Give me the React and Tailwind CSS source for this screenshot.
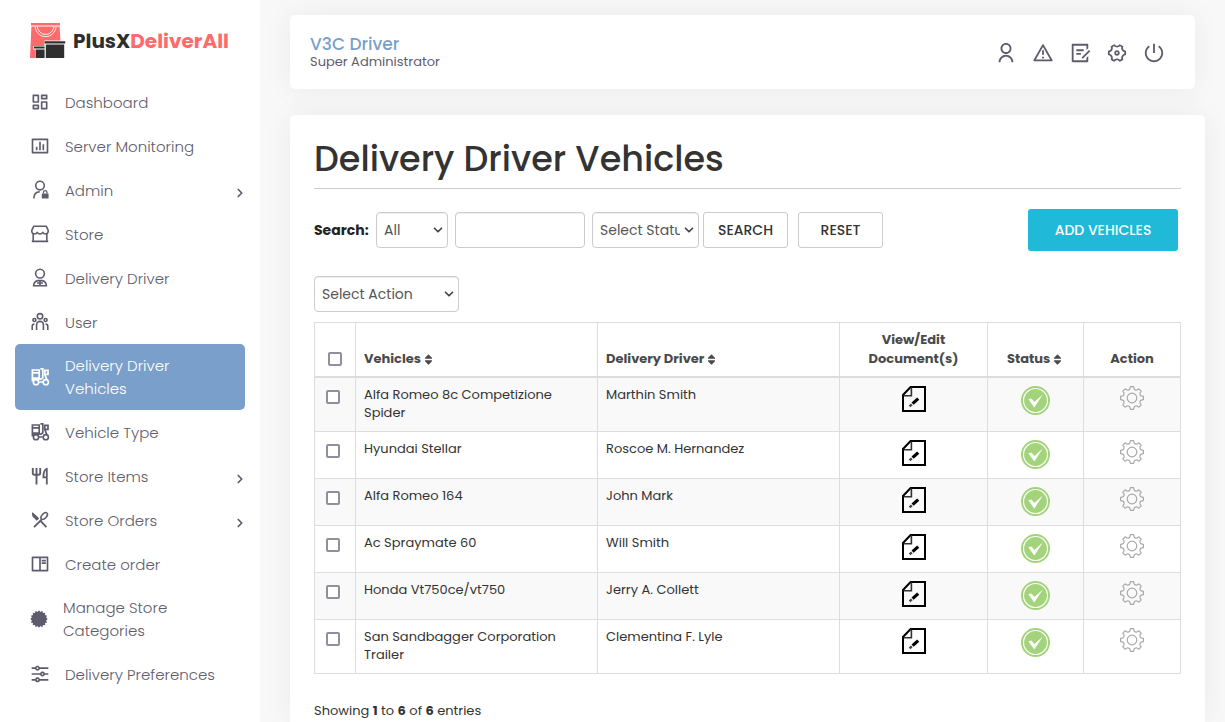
import React from 'react';
import {
  RiAlertLine,
  RiBarChartBoxLine,
  RiBookReadLine,
  RiDashboardLine,
  RiDraftLine,
  RiEqualizerLine,
  RiSettings4Line,
  RiShutDownLine,
  RiUserLine,
} from 'react-icons/ri';
import { FaSort } from 'react-icons/fa';
import { ChevronDown, ChevronRight } from 'lucide-react';

// Points of a star/burst shape, used for the badge icon
function burst(cx, cy, outer, inner, count) {
  const pts = [];
  for (let i = 0; i < count * 2; i++) {
    const r = i % 2 === 0 ? outer : inner;
    const a = (Math.PI * i) / count;
    pts.push(`${(cx + r * Math.sin(a)).toFixed(2)},${(cy - r * Math.cos(a)).toFixed(2)}`);
  }
  return pts.join(' ');
}

// Outline of an eight tooth gear
function gearPath(c, outer, inner) {
  const steps = [
    [-13, inner],
    [-8, outer],
    [8, outer],
    [13, inner],
  ];
  let d = '';
  for (let t = 0; t < 8; t++) {
    steps.forEach(([off, r], i) => {
      const a = ((t * 45 + off) * Math.PI) / 180;
      const x = (c + r * Math.sin(a)).toFixed(2);
      const y = (c - r * Math.cos(a)).toFixed(2);
      if (t === 0 && i === 0) d += `M${x} ${y}`;
      else if (i === 0) d += `A2.6 2.6 0 0 0 ${x} ${y}`;
      else d += `L${x} ${y}`;
    });
  }
  const a = (-13 * Math.PI) / 180;
  d += `A2.6 2.6 0 0 0 ${(c + inner * Math.sin(a)).toFixed(2)} ${(c - inner * Math.cos(a)).toFixed(2)}Z`;
  return d;
}

const BURST = burst(10, 10, 9.8, 8, 16);
const GEAR = gearPath(12, 11.5, 9.4);

function LineIcon({ children }) {
  return (
    <svg viewBox="0 0 20 20" className="size-5 shrink-0" fill="none" stroke="currentColor" strokeWidth="1.6" aria-hidden="true">
      {children}
    </svg>
  );
}

const AdminIcon = () => (
  <LineIcon>
    <circle cx="10" cy="5.6" r="4.3" />
    <path d="M3.8 18.5c0-4 2.4-6.6 6-6.8" />
    <rect x="11.8" y="13.4" width="6.8" height="5.2" rx="0.6" fill="currentColor" stroke="none" />
    <path d="M13.4 13.6v-1.2a1.8 1.8 0 0 1 3.6 0v1.2" strokeWidth="1.3" />
  </LineIcon>
);

const StoreIcon = () => (
  <LineIcon>
    <path d="M3.8 2.2h12.4l2 4.2c.3 2.4-1 3.6-2.6 3.6-1.3 0-2.2-.6-2.8-1.6-.6 1-1.5 1.6-2.8 1.6s-2.2-.6-2.8-1.6C6.6 9.400 5.700 10 4.400 10 2.800 10 1.500 8.800 1.800 6.400z" strokeLinejoin="round" />
    <path d="M3.200 9.600v7.800M16.800 9.600v7.800M1.800 17.400h16.400" />
  </LineIcon>
);

const DriverIcon = () => (
  <LineIcon>
    <circle cx="10" cy="5.6" r="4.4" />
    <path d="M3.600 17.800c.2-2.600 1.600-4.600 4-5.200h4.800c2.400.6 3.800 2.600 4 5.200zM10 12.600v5M7 15h6" />
  </LineIcon>
);

const UsersIcon = () => (
  <LineIcon>
    <circle cx="10" cy="4.3" r="2.7" />
    <circle cx="4.4" cy="8" r="1.5" />
    <circle cx="15.6" cy="8" r="1.5" />
    <path d="M6.600 18v-5.200a3.400 3.400 0 0 1 6.800 0V18M2.200 18v-3.600c0-1.600.7-2.400 2.200-2.400M17.800 18v-3.600c0-1.600-.7-2.400-2.200-2.400" />
  </LineIcon>
);

const MopedIcon = () => (
  <LineIcon>
    <path d="M2.400 3h6.800v8.200H2.400zM2.400 5.800h6.800M2.400 10.600v4M2.400 12.200H11l1.800-1.400V1.800h-2.400M14.800 3.400h3.200v4h-3.200zM14.800 7.400l2 5.200M8.600 15h4.200" strokeWidth="1.700" />
    <circle cx="6" cy="15.200" r="2.600" />
    <circle cx="15.800" cy="15.200" r="2.600" />
  </LineIcon>
);

const ForkKnifeIcon = () => (
  <LineIcon>
    <path d="M2.800 2v5q0 1.800 1.600 1.800h4.200q1.600 0 1.600-1.800V2M6.500 2v16.400" strokeWidth="1.900" />
    <path d="M16.800 18.400V2.800c-2.400.6-3.400 3-3.400 8.600h3.400" strokeWidth="1.800" />
  </LineIcon>
);

const CutleryIcon = () => (
  <LineIcon>
    <path d="M4 17.200 12 9.200M9.800 10.200l6.600 7" strokeWidth="1.900" />
    <path d="M2.600 2.800c-.6 2 .2 3.800 1.800 5.200l2.400 2.200 2-1.800z" fill="currentColor" strokeWidth="1" />
    <ellipse cx="14.200" cy="6" rx="2.300" ry="4" transform="rotate(42 14.200 6)" />
  </LineIcon>
);

const BadgeIcon = () => (
  <svg viewBox="0 0 20 20" className="size-[18px] shrink-0" aria-hidden="true">
    <polygon points={BURST} fill="currentColor" />
  </svg>
);

function LogoMark() {
  return (
    <svg viewBox="0 0 36 36" className="size-9" aria-hidden="true">
      <path d="M1 0h29v2.600H1zM1.400 3.600h28.200L31.500 35H0z" fill="#ff6b6b" />
      <path d="M5 3.600c1 5.600 4.600 10 10.600 10s9.600-4.400 10.600-10M7.200 3.600c1 4.400 3.800 7.800 8.400 7.800s7.400-3.400 8.400-7.800" fill="none" stroke="#fff" strokeWidth="0.900" />
      <path d="M3.400 23h11v-5.600H36v4.400h-1.200V36H5V26.400H3.400z" fill="#fff" />
      <path d="M4 23.600h10.600v2H4zM5.600 26.600h9V35h-9zM14.600 18.200h20.600v2.200H14.600zM15.800 21.400h18.400V35H15.800z" fill="#2e2e2e" />
    </svg>
  );
}

function DocumentIcon() {
  return (
    <svg viewBox="0 0 24 26" className="h-[26px] w-6" fill="none" stroke="#000" aria-hidden="true">
      <path d="M8.600 1H23v24H1V9z" strokeWidth="2" />
      <path d="M9.400 1.600v8.200H1.600" strokeWidth="1.600" stroke="#333" />
      <path d="m10.600 17.600 5.600-5" strokeWidth="3.200" />
      <path d="m7.600 20.400 2.200-2" strokeWidth="2.400" stroke="#444" />
    </svg>
  );
}

function ActiveIcon() {
  return (
    <svg viewBox="0 0 30 30" className="size-[29px]" aria-hidden="true">
      <circle cx="15" cy="15" r="14" fill="#fff" stroke="#a3d47c" strokeWidth="2" />
      <circle cx="15" cy="15" r="11.800" fill="#a3d47c" />
      <path d="M7.600 13.600 10.800 13l3 3.600 8.800-7.800-8.800 13.400z" fill="#fff" />
    </svg>
  );
}

function GearIcon() {
  return (
    <svg viewBox="0 0 24 24" className="size-6" fill="none" stroke="#a9a9a9" strokeWidth="1.200" strokeLinejoin="round" aria-hidden="true">
      <path d={GEAR} />
      <circle cx="12" cy="12" r="4.800" />
    </svg>
  );
}

const menu = [
  { label: 'Dashboard', icon: RiDashboardLine },
  { label: 'Server Monitoring', icon: RiBarChartBoxLine },
  { label: 'Admin', icon: AdminIcon, sub: true },
  { label: 'Store', icon: StoreIcon },
  { label: 'Delivery Driver', icon: DriverIcon },
  { label: 'User', icon: UsersIcon },
  { label: 'Delivery Driver Vehicles', icon: MopedIcon, active: true },
  { label: 'Vehicle Type', icon: MopedIcon },
  { label: 'Store Items', icon: ForkKnifeIcon, sub: true },
  { label: 'Store Orders', icon: CutleryIcon, sub: true },
  { label: 'Create order', icon: RiBookReadLine },
  { label: 'Manage Store Categories', icon: BadgeIcon },
  { label: 'Delivery Preferences', icon: RiEqualizerLine },
];

const tools = [
  { label: 'Profile', icon: RiUserLine },
  { label: 'Alerts', icon: RiAlertLine },
  { label: 'Notes', icon: RiDraftLine },
  { label: 'Settings', icon: RiSettings4Line },
  { label: 'Log out', icon: RiShutDownLine },
];

const vehicles = [
  { name: 'Alfa Romeo 8c Competizione Spider', driver: 'Marthin Smith' },
  { name: 'Hyundai Stellar', driver: 'Roscoe M. Hernandez' },
  { name: 'Alfa Romeo 164', driver: 'John Mark' },
  { name: 'Ac Spraymate 60', driver: 'Will Smith' },
  { name: 'Honda Vt750ce/vt750', driver: 'Jerry A. Collett' },
  { name: 'San Sandbagger Corporation Trailer', driver: 'Clementina F. Lyle' },
];

function Sidebar() {
  return (
    <aside className="w-[260px] shrink-0 bg-white">
      <a href="#" className="flex h-20 items-center gap-[7px] pt-0.5 pl-[30px] text-xl font-bold text-[#2e2e2e]">
        <LogoMark />
        <span>
          PlusX<span className="text-[#ff6b6b]">DeliverAll</span>
        </span>
      </a>
      <nav className="px-[15px]">
        <ul>
          {menu.map(({ label, icon: Icon, active, sub }) => (
            <li key={label}>
              <a
                href="#"
                className={`flex min-h-11 items-center gap-[15px] rounded-[5px] py-[10px] pl-[15px] text-[15px] leading-[23px] font-light ${
                  active ? 'bg-[#7a9fcb] text-white' : 'text-[#5e5c6c]'
                }`}
              >
                <Icon className="size-5 shrink-0" />
                <span className="max-w-40">{label}</span>
                {sub && <ChevronRight className="mt-1.5 ml-auto size-[14px] -mr-0.5" strokeWidth={3} />}
              </a>
            </li>
          ))}
        </ul>
      </nav>
    </aside>
  );
}

function Select({ label, text, className }) {
  return (
    <div className={`relative h-9 ${className}`}>
      <select
        aria-label={label}
        className="size-full appearance-none rounded border border-[#ccc] bg-white pr-[18px] pl-[7px] text-sm text-[#555] shadow-[inset_0_1px_1px_rgba(0,0,0,0.075)]"
      >
        <option>{text}</option>
      </select>
      <ChevronDown className="pointer-events-none absolute top-[11px] right-[3px] size-[14px] text-[#444]" strokeWidth={3} />
    </div>
  );
}

function Check({ label }) {
  return (
    <input
      type="checkbox"
      aria-label={label}
      className="block size-[14px] appearance-none rounded-[2px] border-2 border-[#8f8f9d] bg-white checked:bg-[#7a9fcb]"
    />
  );
}

function VehiclesTable() {
  const th = 'border border-[#ddd] border-b-2 px-2 pt-[7px] pb-2 align-bottom font-bold';
  const td = 'border border-[#ddd] px-2 pt-2 pb-[9px]';

  return (
    <table className="mt-[10px] w-full table-fixed border-collapse text-[13px] leading-[18px] text-[#333]">
      <thead className="leading-[19px] text-[#4a4a4a]">
        <tr>
          <th className={`${th} w-[41px]`}>
            <div className="flex h-[19px] items-center justify-center">
              <Check label="Select all" />
            </div>
          </th>
          <th className={`${th} text-left`}>
            Vehicles <FaSort className="-ml-0.5 inline size-[13px]" />
          </th>
          <th className={`${th} text-left`}>
            Delivery Driver <FaSort className="-ml-0.5 inline size-[13px]" />
          </th>
          <th className={`${th} w-[148px]`}>View/Edit Document(s)</th>
          <th className={`${th} w-24`}>
            Status <FaSort className="-ml-0.5 inline size-[13px]" />
          </th>
          <th className={`${th} w-[97px]`}>Action</th>
        </tr>
      </thead>
      <tbody className="align-top">
        {vehicles.map((v) => (
          <tr key={v.name} className="odd:bg-[#f9f9f9]">
            <td className={td}>
              <div className="pt-1 pl-[3px]">
                <Check label={`Select ${v.name}`} />
              </div>
            </td>
            <td className={td}>{v.name}</td>
            <td className={td}>{v.driver}</td>
            <td className={td}>
              <button type="button" aria-label="View or edit documents" className="mx-auto block">
                <DocumentIcon />
              </button>
            </td>
            <td className={td}>
              <div className="flex justify-center">
                <ActiveIcon />
              </div>
            </td>
            <td className={td}>
              <button type="button" aria-label="Actions" className="mx-auto block">
                <GearIcon />
              </button>
            </td>
          </tr>
        ))}
      </tbody>
    </table>
  );
}

export default function App() {
  return (
    <div className="flex h-screen overflow-hidden bg-[#f8f8f8] font-['Poppins',Inter,sans-serif]">
      <Sidebar />

      <div className="flex min-w-0 flex-1 flex-col pt-[15px] pr-5 pl-[30px]">
        <header className="mr-[10px] flex h-[74px] shrink-0 items-center justify-between rounded-[5px] bg-white px-5 shadow-[0_0_30px_rgba(0,0,0,0.06)]">
          <div>
            <p className="text-[17px] leading-5 font-medium text-[#7a9fcb]">V3C Driver</p>
            <p className="text-[13px] leading-4 text-[#5e5c6c]">Super Administrator</p>
          </div>
          <div className="flex gap-[15px] pt-0.5 pr-[10px] text-[#5e5c6c]">
            {tools.map(({ label, icon: Icon }) => (
              <button key={label} type="button" aria-label={label}>
                <Icon className="size-[22px]" />
              </button>
            ))}
          </div>
        </header>

        <main className="mt-[26px] flex-1 rounded-t-[5px] bg-white px-6 pt-6 shadow-[0_0_30px_rgba(0,0,0,0.06)]">
          <h1 className="border-b border-[#ccc] pb-[9px] text-[35px] leading-10 font-medium text-[#333]">Delivery Driver Vehicles</h1>

          {/* Search bar */}
          <form className="mt-5 flex items-center justify-between pr-[3px] text-sm">
            <div className="flex items-center">
              <label htmlFor="keyword" className="w-[62px] font-bold text-[#222]">
                Search:
              </label>
              <Select label="Search field" text="All" className="w-[72px]" />
              <input
                id="keyword"
                type="text"
                className="mx-[7px] h-9 w-[130px] rounded border border-[#ccc] px-2 text-[#555] shadow-[inset_0_1px_1px_rgba(0,0,0,0.075)]"
              />
              <Select label="Status" text="Select Status" className="w-[107px]" />
              <button type="submit" className="ml-1 h-9 w-[85px] rounded-[3px] border border-[#ccc] font-medium text-[#333]">
                SEARCH
              </button>
              <button type="reset" className="ml-[10px] h-9 w-[85px] rounded-[3px] border border-[#ccc] font-medium text-[#333]">
                RESET
              </button>
            </div>
            <button type="button" className="h-[42px] w-[150px] rounded-[3px] bg-[#20b9d8] font-medium text-white">
              ADD VEHICLES
            </button>
          </form>

          <Select label="Action" text="Select Action" className="mt-[25px] w-[145px]" />

          <VehiclesTable />

          <p className="mt-[27px] text-[13px] leading-5 text-[#333]">
            Showing <b>1</b> to <b>6</b> of <b>6</b> entries
          </p>
        </main>
      </div>
    </div>
  );
}
